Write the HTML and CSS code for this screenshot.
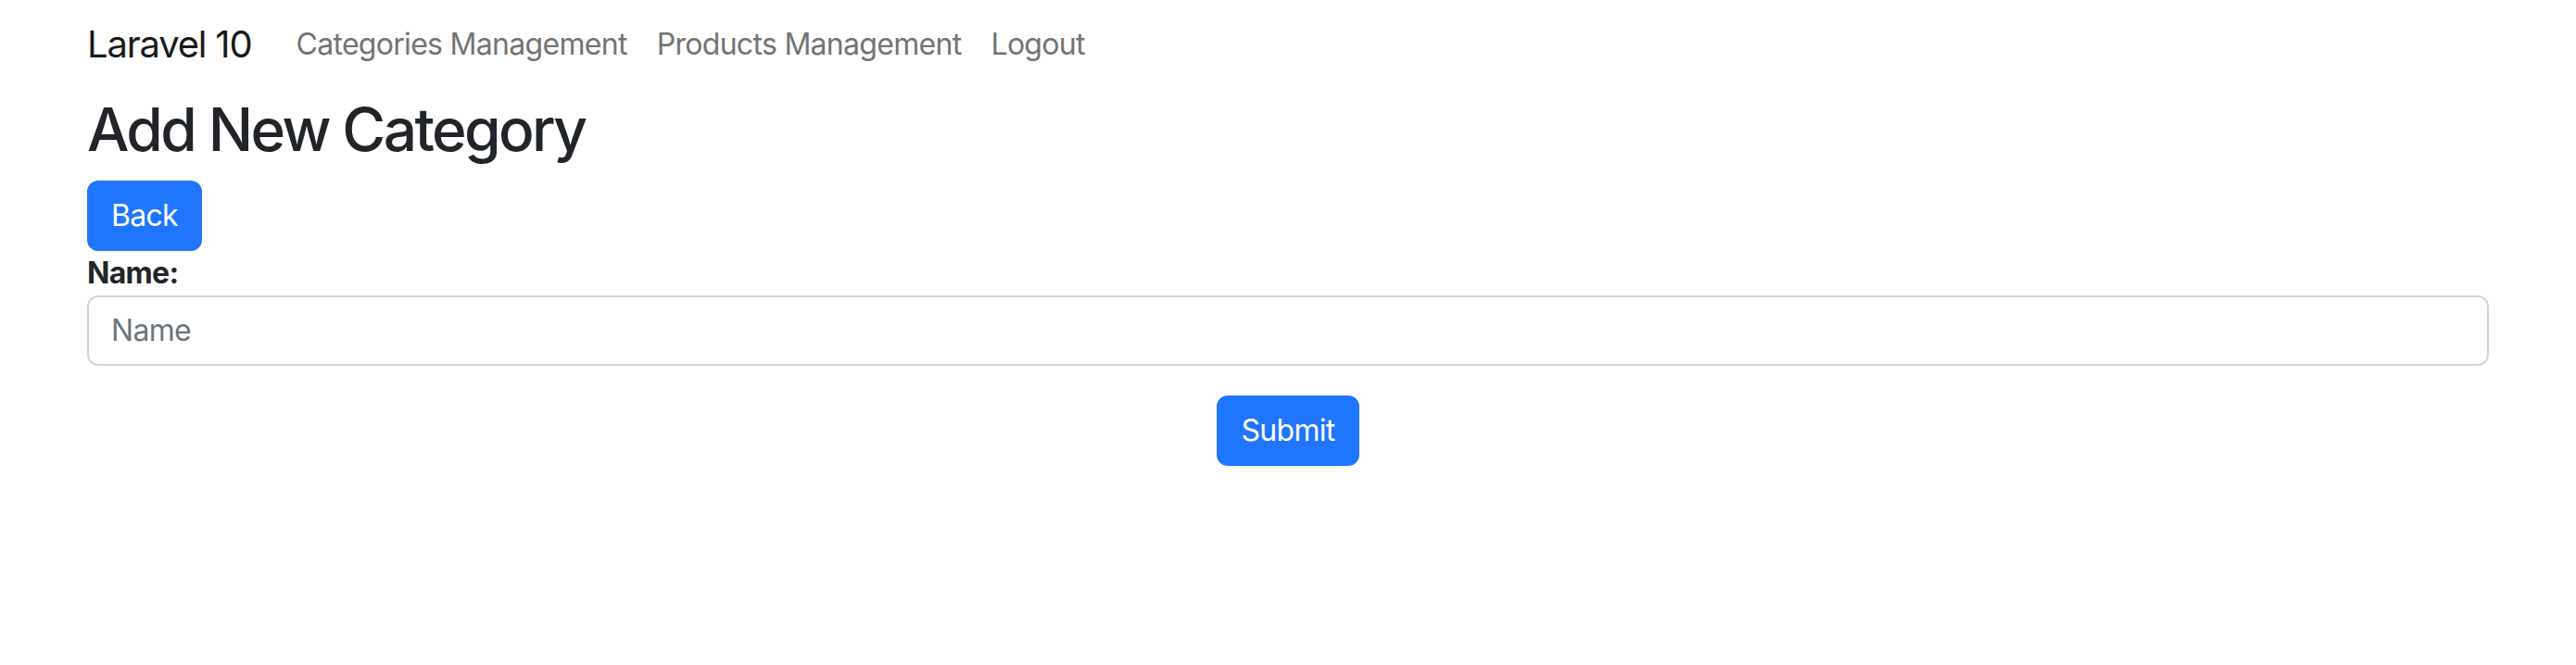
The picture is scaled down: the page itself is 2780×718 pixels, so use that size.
FILE: index.html
```html
<!DOCTYPE html>
<html lang="en">
<head>
<meta charset="utf-8">
<title>Laravel 10</title>
<link rel="stylesheet" href="styles.css">
</head>
<body>
<div class="container">
  <nav class="navbar">
    <a class="brand" href="#">Laravel 10</a>
    <ul class="nav">
      <li><a class="nav-link" href="#">Categories Management</a></li>
      <li><a class="nav-link" href="#">Products Management</a></li>
      <li><a class="nav-link" href="#">Logout</a></li>
    </ul>
  </nav>
  <h2 class="title">Add New Category</h2>
  <div class="actions">
    <a class="btn" href="#">Back</a>
  </div>
  <form class="form">
    <div class="group">
      <strong class="label">Name:</strong>
      <input class="input" type="text" name="name" placeholder="Name">
    </div>
    <div class="submit-row">
      <button class="btn" type="submit">Submit</button>
    </div>
  </form>
</div>
</body>
</html>
```
FILE: styles.css
```css
* { box-sizing: border-box; }
html, body {
  margin: 0;
  padding: 0;
  background: #fff;
}
body {
  font-family: Inter, "Noto Sans", "Liberation Sans", sans-serif;
  font-size: 32px;
  line-height: 1.5;
  letter-spacing: -0.7px;
  color: #212529;
}
.container {
  width: 2592px;
  margin: 0 auto;
}
.navbar {
  display: flex;
  align-items: center;
  padding: 8px 0 4px;
}
.brand {
  font-size: 40px;
  line-height: 60px;
  letter-spacing: -1.2px;
  padding: 10px 0;
  margin-right: 32px;
  color: #1a1a1a;
  text-decoration: none;
  white-space: nowrap;
}
.nav {
  display: flex;
  list-style: none;
  margin: 0;
  padding: 0;
}
.nav-link {
  display: block;
  padding: 16px;
  font-size: 32px;
  line-height: 48px;
  color: #737373;
  text-decoration: none;
  white-space: nowrap;
}
.title {
  margin: 10px 0 16px;
  font-size: 64px;
  line-height: 1.2;
  font-weight: 500;
  letter-spacing: -2.6px;
  color: #212529;
}
.actions {
  display: flex;
}
.btn {
  display: inline-block;
  padding: 12px 24px;
  font-family: inherit;
  font-size: 32px;
  line-height: 48px;
  letter-spacing: -0.7px;
  color: #fff;
  background: #1f75fe;
  border: 2px solid #1f75fe;
  border-radius: 12px;
  text-decoration: none;
  cursor: pointer;
}
.form {
  margin: 0;
}
.group {
  display: flex;
  flex-direction: column;
}
.label {
  font-weight: 700;
  line-height: 48px;
}
.input {
  display: block;
  width: 100%;
  height: 76px;
  padding: 12px 24px;
  font-family: inherit;
  font-size: 32px;
  line-height: 48px;
  letter-spacing: -0.7px;
  color: #212529;
  background: #fff;
  border: 2px solid #d0d5db;
  border-radius: 12px;
  outline: none;
}
.input::placeholder {
  color: #6c757d;
  opacity: 1;
}
.submit-row {
  display: flex;
  justify-content: center;
  margin-top: 32px;
}
```
